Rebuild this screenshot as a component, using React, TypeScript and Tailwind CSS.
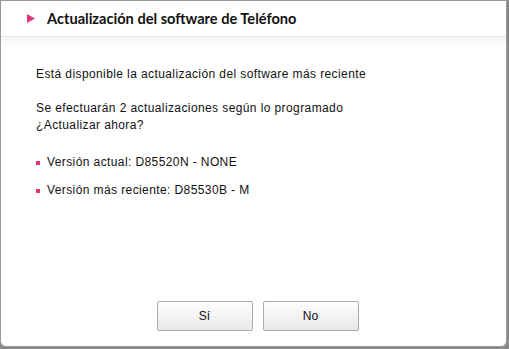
import React from 'react';

const versions = [
  'Versión actual: D85520N - NONE',
  'Versión más reciente: D85530B - M',
];

export default function App() {
  return (
    <div className="w-[509px] h-[349px] bg-[#8a8a8a] overflow-hidden">
      <div className="w-[507px] h-[347px] bg-white border border-[#9a9a9a] rounded-br-[6px] rounded-bl-[6px] flex flex-col">
        {/* Header */}
        <div className="h-[36px] shrink-0 flex items-center pl-[26px] border-b border-[#e4e4e4] shadow-[0_4px_8px_rgba(0,0,0,0.06)]">
          <svg width="8" height="9" viewBox="0 0 8 9" className="mr-[12px]">
            <polygon points="0,0 8,4.5 0,9" fill="#e0357a" />
          </svg>
          <h1 className="text-[14.6px] font-bold text-[#111]" style={{ fontFamily: 'Lato, "Open Sans", sans-serif' }}>
            Actualización del software de Teléfono
          </h1>
        </div>

        {/* Body */}
        <div className="flex-1 px-[35px] pt-[29px] text-[12px] text-[#111] leading-[17px] tracking-[0.4px]" style={{ fontFamily: '"Liberation Sans", Arial, sans-serif' }}>
          <p>Está disponible la actualización del software más reciente</p>
          <p className="mt-[17px]">Se efectuarán 2 actualizaciones según lo programado</p>
          <p>¿Actualizar ahora?</p>
          <ul className="mt-[20px] flex flex-col gap-[11px]">
            {versions.map(v => (
              <li key={v} className="flex items-center">
                <span className="w-[4px] h-[4px] bg-[#e0357a] mr-[7px]" />
                <span>{v}</span>
              </li>
            ))}
          </ul>
        </div>

        {/* Buttons */}
        <div className="flex justify-center gap-[10px] pb-[15px] pl-[8px]" style={{ fontFamily: '"Liberation Sans", Arial, sans-serif' }}>
          <button className="w-[96px] h-[30px] border border-[#a9a9a9] rounded-[2px] bg-gradient-to-b from-[#fdfdfd] to-[#e9e9e9] text-[12px] text-[#111]">Sí</button>
          <button className="w-[96px] h-[30px] border border-[#a9a9a9] rounded-[2px] bg-gradient-to-b from-[#fdfdfd] to-[#e9e9e9] text-[12px] text-[#111]">No</button>
        </div>
      </div>
    </div>
  );
}
